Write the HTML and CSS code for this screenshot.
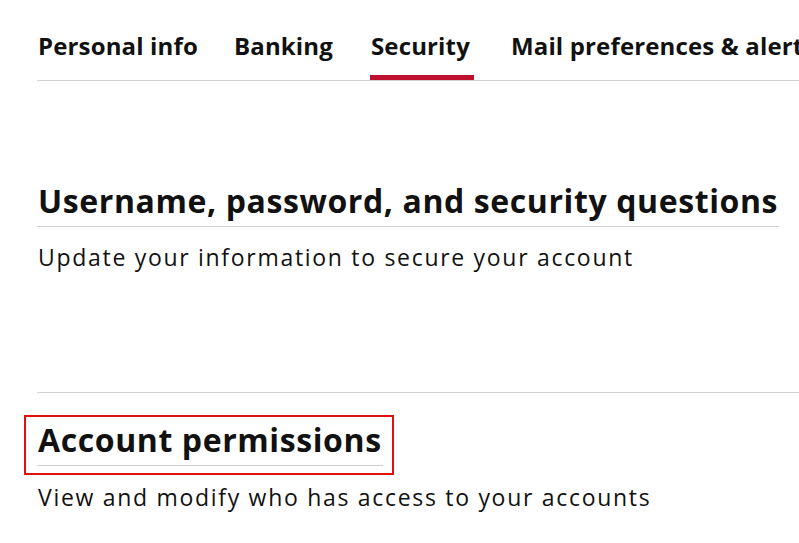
FILE: index.html
```html
<!DOCTYPE html>
<html>
<head>
<meta charset="utf-8">
<link rel="stylesheet" href="styles.css">
</head>
<body>
<div class="page">
  <nav class="tabs">
    <a class="tab">Personal info</a>
    <a class="tab">Banking</a>
    <a class="tab active">Security</a>
    <a class="tab">Mail preferences &amp; alerts</a>
  </nav>
  <section class="section first">
    <h2 class="heading">Username, password, and security questions</h2>
    <p class="desc">Update your information to secure your account</p>
  </section>
  <section class="section second">
    <div class="highlight">
      <h2 class="heading">Account permissions</h2>
    </div>
    <p class="desc">View and modify who has access to your accounts</p>
  </section>
</div>
</body>
</html>
```
FILE: styles.css
```css
html, body {
  margin: 0;
  padding: 0;
  background: #fff;
  overflow: hidden;
}
body {
  font-family: "Open Sans", "Noto Sans", sans-serif;
  color: #111;
}
.page {
  padding-left: 37px;
  width: 800px;
}
.tabs {
  display: flex;
  gap: 36px;
  height: 81px;
  border-bottom: 1px solid #d0d0d0;
  white-space: nowrap;
  padding-left: 1px;
  box-sizing: border-box;
}
.tab {
  font-size: 24px;
  font-weight: 700;
  letter-spacing: 0.15px;
  line-height: 33px;
  padding-top: 29px;
  box-sizing: border-box;
  height: 80px;
  color: #111;
}
.tab.active {
  border-bottom: 5px solid #c0102f;
  padding: 29px 4px 0 1px;
  margin: 0 1px;
}
.section {
  display: flex;
  flex-direction: column;
  align-items: flex-start;
}
.first {
  padding-top: 100px;
  height: 312px;
  box-sizing: border-box;
  border-bottom: 1px solid #d0d0d0;
}
.heading {
  margin: 0;
  font-size: 32px;
  font-weight: 700;
  letter-spacing: 0.6px;
  line-height: 40px;
  padding: 0 1px 5px 1px;
  border-bottom: 1px solid #d0d0d0;
}
.desc {
  margin: 15px 0 0 1px;
  font-size: 23px;
  font-weight: 400;
  letter-spacing: 1.7px;
  line-height: 30px;
}
.second {
  padding-top: 22px;
}
.highlight {
  margin-left: -13px;
  border: 2px solid #e01010;
  padding: 3px 9px 7px 11px;
}
.second .desc {
  margin-top: 7px;
}
```
